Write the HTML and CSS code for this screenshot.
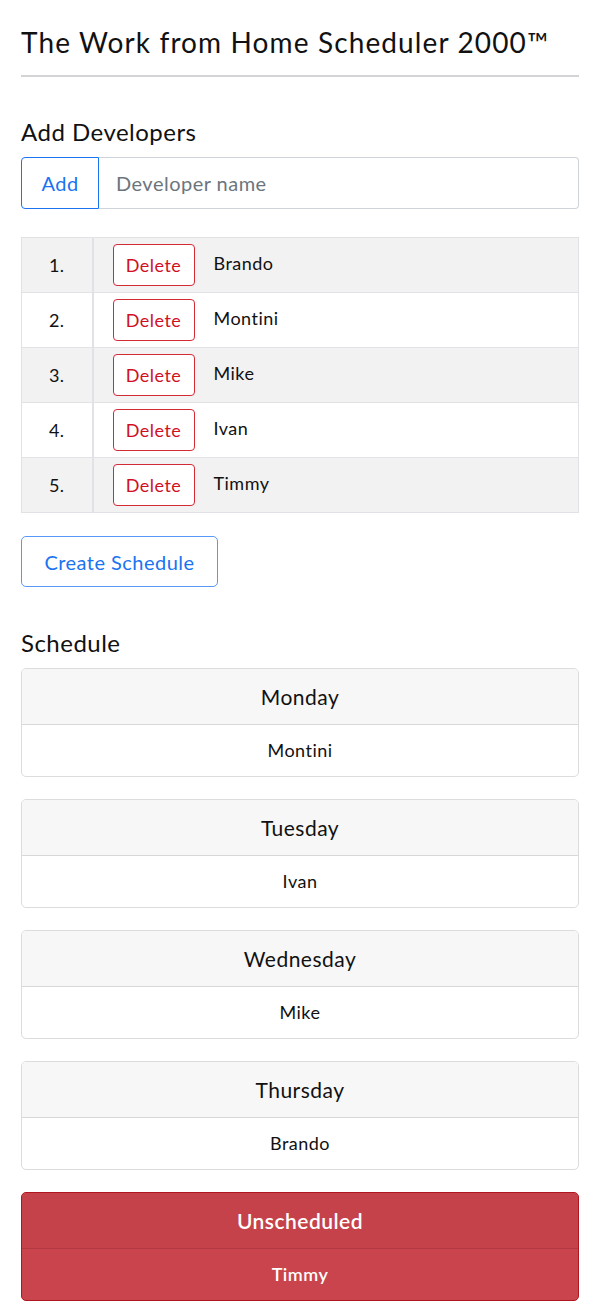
FILE: index.html
```html
<!DOCTYPE html>
<html lang="en">
<head>
<meta charset="utf-8">
<title>The Work from Home Scheduler 2000™</title>
<link rel="stylesheet" href="styles.css">
</head>
<body>
<div class="container">
  <h1 class="title">The Work from Home Scheduler 2000™</h1>
  <hr class="rule">
  <h2 class="section">Add Developers</h2>
  <div class="input-group">
    <button class="btn btn-add">Add</button>
    <input class="name-input" type="text" placeholder="Developer name">
  </div>
  <table class="dev-table">
    <tbody>
      <tr><td class="num">1.</td><td class="row-cell"><button class="btn btn-delete">Delete</button><span class="dev-name">Brando</span></td></tr>
      <tr><td class="num">2.</td><td class="row-cell"><button class="btn btn-delete">Delete</button><span class="dev-name">Montini</span></td></tr>
      <tr><td class="num">3.</td><td class="row-cell"><button class="btn btn-delete">Delete</button><span class="dev-name">Mike</span></td></tr>
      <tr><td class="num">4.</td><td class="row-cell"><button class="btn btn-delete">Delete</button><span class="dev-name">Ivan</span></td></tr>
      <tr><td class="num">5.</td><td class="row-cell"><button class="btn btn-delete">Delete</button><span class="dev-name">Timmy</span></td></tr>
    </tbody>
  </table>
  <button class="btn btn-create">Create Schedule</button>
  <h2 class="section schedule-title">Schedule</h2>
  <div class="cards">
    <div class="card"><div class="card-header">Monday</div><div class="card-body">Montini</div></div>
    <div class="card"><div class="card-header">Tuesday</div><div class="card-body">Ivan</div></div>
    <div class="card"><div class="card-header">Wednesday</div><div class="card-body">Mike</div></div>
    <div class="card"><div class="card-header">Thursday</div><div class="card-body">Brando</div></div>
    <div class="card card-danger"><div class="card-header">Unscheduled</div><div class="card-body">Timmy</div></div>
  </div>
</div>
</body>
</html>
```

FILE: styles.css
```css
* { box-sizing: border-box; }
html, body { margin: 0; padding: 0; background: #fff; }
body {
  font-family: "Lato", "Liberation Sans", sans-serif;
  color: #111;
  letter-spacing: 0.03em;
}
.container { padding: 0 21px; }
.title {
  margin: 25px 0 0;
  font-size: 28px;
  line-height: 34px;
  font-weight: 400;
  letter-spacing: 0.04em;
}
.rule {
  margin: 16px 0 0;
  border: 0;
  border-top: 2px solid #d4d4d6;
}
.section {
  margin: 40px 0 0;
  font-size: 24px;
  line-height: 29px;
  font-weight: 400;
}
.input-group {
  display: flex;
  margin-top: 11px;
  height: 52px;
}
.btn {
  font-family: inherit;
  letter-spacing: inherit;
  background: #fff;
  cursor: pointer;
}
.btn-add {
  width: 78px;
  font-size: 20px;
  color: #1a73f0;
  border: 1px solid #1a73f0;
  border-radius: 4px 0 0 4px;
  padding: 0;
}
.name-input {
  flex: 1;
  min-width: 0;
  font-family: inherit;
  letter-spacing: inherit;
  font-size: 20px;
  padding: 0 17px;
  border: 1px solid #ced4da;
  border-left: 0;
  border-radius: 0 4px 4px 0;
  color: #495057;
}
.name-input::placeholder { color: #6c757d; }
.dev-table {
  margin-top: 28px;
  width: 100%;
  border-collapse: collapse;
}
.dev-table td {
  border: 1px solid #e0e2e6;
  height: 55px;
  padding: 0;
  font-size: 18px;
}
.dev-table tr:nth-child(odd) td { background: #f2f2f2; }
.num { width: 71px; text-align: center; border-right-width: 2px !important; }
.row-cell { padding-left: 19px !important; }
.btn-delete {
  width: 82px;
  height: 42px;
  font-size: 18px;
  color: #d0101e;
  border: 1px solid #d42a35;
  border-radius: 4px;
  padding: 0;
  vertical-align: middle;
}
.dev-name {
  display: inline-block;
  margin-left: 19px;
  vertical-align: middle;
  position: relative;
  top: -2px;
}
.btn-create {
  display: block;
  margin-top: 23px;
  width: 197px;
  height: 51px;
  font-size: 20px;
  color: #1a73f0;
  border: 1px solid #5a98f8;
  border-radius: 5px;
  padding: 0;
}
.schedule-title { margin-top: 41px; }
.cards {
  margin-top: 11px;
  display: flex;
  flex-direction: column;
  gap: 22px;
}
.card {
  border: 1px solid #dcdcdc;
  border-radius: 5px;
  overflow: hidden;
  text-align: center;
}
.card-header {
  height: 56px;
  line-height: 55px;
  background: #f7f7f7;
  border-bottom: 1px solid #d8d8d8;
  font-size: 21px;
}
.card-body {
  height: 51px;
  line-height: 50px;
  font-size: 18px;
}
.card-danger {
  border-color: #b0161f;
  color: #fff;
  background: #c9444c;
}
.card-danger .card-header {
  background: #c6424a;
  border-bottom-color: #b13a42;
  font-weight: 600;
}
.card-danger .card-body { font-weight: 600; }
```
